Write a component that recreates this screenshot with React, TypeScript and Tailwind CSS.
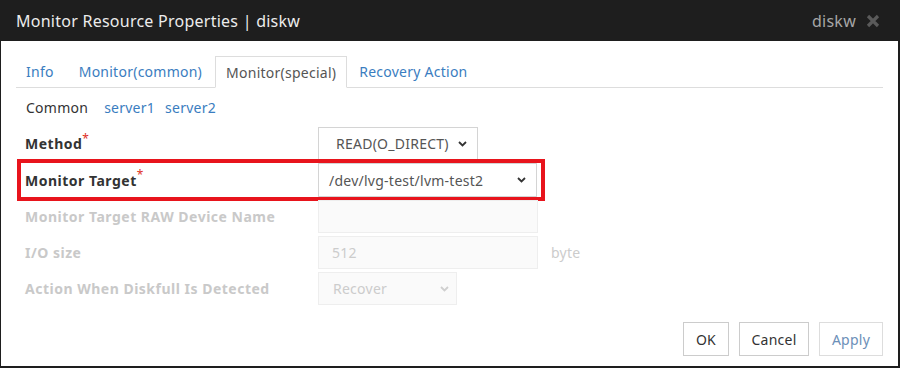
import React from "react";

const font = { fontFamily: '"Noto Sans", "Noto Sans CJK JP", sans-serif' };

function Chevron({ color = "#333" }: { color?: string }) {
  return (
    <svg width="9" height="6" viewBox="0 0 9 6" className="shrink-0">
      <path d="M1 1 L4.5 4.5 L8 1" fill="none" stroke={color} strokeWidth="1.8" />
    </svg>
  );
}

function Label({ text, required, disabled }: { text: string; required?: boolean; disabled?: boolean }) {
  return (
    <div className="w-[297px] shrink-0 pl-[4px] flex items-center">
      <span className={`text-[14px] font-bold tracking-[0.5px] ${disabled ? "text-[#c9c9c9]" : "text-[#333]"}`}>{text}</span>
      {required && <span className="text-[#e0301e] text-[12px] leading-none relative -top-[5px]">*</span>}
    </div>
  );
}

export default function App() {
  return (
    <div className="w-[900px] h-[368px] bg-[#1e1e1e] pl-[1px] pr-[2px] pb-[2px] flex flex-col overflow-hidden tracking-[0.25px]" style={font}>
      <div className="h-[41px] shrink-0 flex items-center pl-[15px] pr-[18px]">
        <span className="text-[16px] text-[#ececec]">Monitor Resource Properties | diskw</span>
        <span className="ml-auto text-[16px] text-[#a6a6a6]">diskw</span>
        <svg width="14" height="14" viewBox="0 0 14 14" className="ml-[10px]">
          <path d="M2 2 L12 12 M12 2 L2 12" stroke="#5a5a5a" strokeWidth="3.2" />
        </svg>
      </div>
      <div className="flex-1 bg-white flex flex-col px-[15px] pt-[15px]">
        <div className="flex border-b border-[#dddddd] h-[32px] text-[14px]">
          <div className="px-[9px] flex items-center text-[#3a7dc0] border border-transparent">Info</div>
          <div className="ml-[4px] px-[10px] flex items-center text-[#3a7dc0] border border-transparent">Monitor(common)</div>
          <div className="ml-[2px] px-[10px] flex items-center text-[#555] border border-[#dddddd] border-b-white bg-white -mb-[1px] h-[32px]">Monitor(special)</div>
          <div className="ml-[1px] px-[10px] flex items-center text-[#3a7dc0] border border-transparent">Recovery Action</div>
        </div>
        <div className="flex items-center h-[38px] text-[14px] pl-[10px] gap-[16px]">
          <span className="text-[#333]">Common</span>
          <div className="flex gap-[10px]">
            <span className="text-[#3a7dc0]">server1</span>
            <span className="text-[#3a7dc0]">server2</span>
          </div>
        </div>
        <div className="flex flex-col gap-[3px] pl-[5px] mt-[1px]">
          <div className="flex h-[33px]">
            <Label text="Method" required />
            <div className="w-[160px] border border-[#d4d4d4] flex items-center pl-[17px] pr-[10px] text-[14px] text-[#555]">
              <span className="flex-1">READ(O_DIRECT)</span>
              <Chevron />
            </div>
          </div>
          <div className="flex h-[34px] w-[520px] outline-4 outline-solid outline-[#e8141c]">
            <Label text="Monitor Target" required />
            <div className="w-[219px] border border-[#d4d4d4] flex items-center pl-[10px] pr-[10px] text-[14px] text-[#555]">
              <span className="flex-1">/dev/lvg-test/lvm-test2</span>
              <Chevron />
            </div>
          </div>
          <div className="flex h-[33px]">
            <Label text="Monitor Target RAW Device Name" disabled />
            <div className="w-[220px] border border-[#eeeeee] bg-[#fafafa]" />
          </div>
          <div className="flex h-[33px]">
            <Label text="I/O size" disabled />
            <div className="w-[220px] border border-[#eeeeee] bg-[#fafafa] flex items-center pl-[13px] text-[14px] text-[#cccccc]">512</div>
            <span className="ml-[13px] flex items-center text-[14px] text-[#cccccc]">byte</span>
          </div>
          <div className="flex h-[33px]">
            <Label text="Action When Diskfull Is Detected" disabled />
            <div className="w-[139px] border border-[#eeeeee] bg-[#fafafa] flex items-center pl-[14px] pr-[7px] text-[14px] text-[#cccccc]">
              <span className="flex-1">Recover</span>
              <Chevron color="#cfcfcf" />
            </div>
          </div>
        </div>
        <div className="mt-auto mb-[10px] flex justify-end gap-[10px] text-[14px]">
          <div className="h-[34px] w-[46px] border border-[#cccccc] flex items-center justify-center text-[#333]">OK</div>
          <div className="h-[34px] w-[70px] border border-[#cccccc] flex items-center justify-center text-[#333]">Cancel</div>
          <div className="h-[34px] w-[64px] border border-[#dddddd] flex items-center justify-center text-[#6c8fb8]">Apply</div>
        </div>
      </div>
    </div>
  );
}
